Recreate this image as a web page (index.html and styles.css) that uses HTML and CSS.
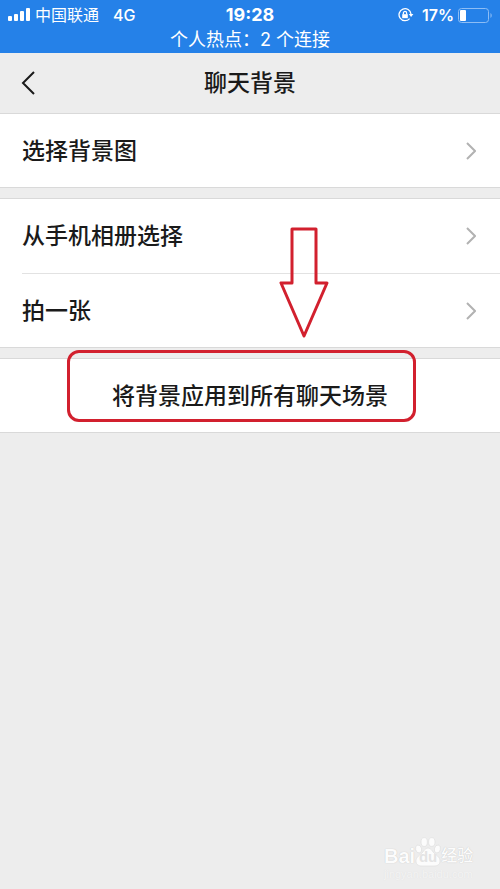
FILE: index.html
```html
<!DOCTYPE html>
<html lang="zh-CN">
<head>
    <meta charset="UTF-8">
    <meta name="viewport" content="width=device-width, initial-scale=1">
    <title>聊天背景</title>
    <link rel="stylesheet" href="styles.css">
</head>
<body>
    <div class="status">
        <div class="status-row">
            <div class="status-left">
                <svg class="signal" width="23" height="14" viewBox="0 0 23 14" fill="#fff">
                    <rect x="0" y="8" width="4" height="5" rx="1"/>
                    <rect x="6" y="6" width="4" height="7" rx="1"/>
                    <rect x="12" y="3" width="4" height="10" rx="1"/>
                    <rect x="18" y="0" width="4" height="13" rx="1"/>
                </svg>
                <span class="carrier">中国联通</span>
                <span class="network">4G</span>
            </div>
            <div class="time">19:28</div>
            <div class="status-right">
                <svg width="16" height="14" viewBox="0 0 16 14" fill="none" stroke="#fff" stroke-width="1.3">
                    <path d="M11.6 10.6A6 6 0 1 1 13 6"/>
                    <path d="M10.8 6h4.6l-2.3 3z" fill="#fff" stroke="none"/>
                    <rect x="4.2" y="6.2" width="5.6" height="4" fill="#fff" stroke="none"/>
                    <path d="M5.4 6.4V5a1.6 1.6 0 0 1 3.2 0v1.4"/>
                </svg>
                <span class="percent">17%</span>
                <svg width="34" height="15" viewBox="0 0 34 15" fill="none">
                    <rect x="0.5" y="0.5" width="30" height="14" rx="3" stroke="#8dbdf5"/>
                    <rect x="2" y="2" width="6" height="11" rx="1" fill="#fff"/>
                    <path d="M32.5 5c1.6 1 1.6 4 0 5z" fill="#8dbdf5"/>
                </svg>
            </div>
        </div>
        <div class="hotspot">个人热点：2 个连接</div>
    </div>

    <header class="nav">
        <button class="back" aria-label="返回">
            <svg width="14" height="24" viewBox="0 0 14 24" fill="none" stroke="#1a1a1a" stroke-width="2">
                <path d="M13 1L2 12l11 11"/>
            </svg>
        </button>
        <h1>聊天背景</h1>
    </header>

    <main>
        <div class="group">
            <a class="row" href="#">
                <span class="label">选择背景图</span>
                <svg class="chevron" viewBox="0 0 10 18"><path d="M1 1l8 8-8 8"/></svg>
            </a>
        </div>
        <div class="group">
            <a class="row" href="#">
                <span class="label">从手机相册选择</span>
                <svg class="chevron" viewBox="0 0 10 18"><path d="M1 1l8 8-8 8"/></svg>
            </a>
            <a class="row" href="#">
                <span class="label">拍一张</span>
                <svg class="chevron" viewBox="0 0 10 18"><path d="M1 1l8 8-8 8"/></svg>
            </a>
        </div>
        <div class="group">
            <button class="apply">将背景应用到所有聊天场景</button>
            <svg class="arrow" width="50" height="112" viewBox="0 0 50 112">
                <path d="M13 2h24v54h11L25 109 2 56h11z"/>
            </svg>
            <div class="mark"></div>
        </div>
    </main>

    <div class="watermark">
        <div class="brand">
            <span>Bai</span>
            <span class="paw">
                <svg width="26" height="30" viewBox="0 0 26 30" fill="#fcfcfc" stroke="#dcdcdc" stroke-width="0.6">
                    <ellipse cx="3.6" cy="12" rx="3" ry="4" transform="rotate(-15 3.6 12)"/>
                    <ellipse cx="9.2" cy="5" rx="3.2" ry="4.4"/>
                    <ellipse cx="16.8" cy="5" rx="3.2" ry="4.4"/>
                    <ellipse cx="22.4" cy="12" rx="3" ry="4" transform="rotate(15 22.4 12)"/>
                    <path d="M13 11c-3 0-4 3-6 5s-6 4-6 8c0 4 3 5 6 5h12c3 0 6-1 6-5 0-4-4-6-6-8s-3-5-6-5z"/>
                </svg>
                <span class="du">du</span>
            </span>
            <span class="cn">经验</span>
        </div>
        <div class="site">jingyan.baidu.com</div>
    </div>
</body>
</html>
```
FILE: styles.css
```css
* {
    box-sizing: border-box;
}
body {
    margin: 0;
    min-height: 100vh;
    position: relative;
    background: #ededed;
    color: #1a1a1a;
    font-family: "Liberation Sans", "Noto Sans CJK SC", sans-serif;
}
button {
    font: inherit;
    color: inherit;
    background: none;
    border: none;
    padding: 0;
    cursor: pointer;
}
svg {
    display: block;
}

/* status bar */
.status {
    height: 53px;
    padding: 2px 8px 0;
    background: #2581e8;
    color: #fff;
}
.status-row {
    display: grid;
    grid-template-columns: 1fr auto 1fr;
    align-items: center;
    height: 24px;
    font-size: 16px;
    line-height: 24px;
}
.status-left,
.status-right {
    display: flex;
    align-items: center;
}
.status-right {
    justify-content: flex-end;
}
.carrier {
    margin: 0 14px 0 4px;
    padding-top: 2px;
}
.network,
.time,
.percent {
    font-family: Inter, sans-serif;
}
.network {
    font-weight: 500;
}
.time {
    font-size: 18px;
    font-weight: 700;
}
.percent {
    margin: 0 4px 0 8px;
    font-weight: 600;
}
.hotspot {
    padding-top: 1px;
    font-family: Inter, "Noto Sans CJK SC", sans-serif;
    font-size: 18px;
    line-height: 26px;
    text-align: center;
}

/* title bar */
.nav {
    display: grid;
    grid-template-columns: 1fr auto 1fr;
    align-items: center;
    height: 60px;
    padding: 0 21px;
}
.nav h1 {
    margin: 0;
    font-size: 23px;
    font-weight: 500;
    line-height: 32px;
}
.back {
    justify-self: start;
}

/* list */
.group {
    position: relative;
    margin-bottom: 10px;
    background: #fff;
    border-top: 1px solid #d9d9d9;
    border-bottom: 1px solid #d9d9d9;
    font-size: 23px;
    font-weight: 500;
}
.row {
    display: flex;
    align-items: center;
    justify-content: space-between;
    height: 74px;
    margin-left: 22px;
    padding-right: 24px;
    color: inherit;
    text-decoration: none;
}
.row:only-child {
    height: 73px;
}
.row + .row {
    border-top: 1px solid #e2e2e2;
}
.label {
    padding-bottom: 4px;
}
.chevron {
    width: 10px;
    height: 18px;
    fill: none;
    stroke: #b2b2b2;
    stroke-width: 2;
}
.apply {
    display: block;
    width: 100%;
    height: 73px;
    padding-bottom: 4px;
}

/* red marks */
.mark {
    position: absolute;
    top: -9px;
    left: 67px;
    right: 84px;
    height: 72px;
    border: 3px solid #d2202e;
    border-radius: 12px;
    pointer-events: none;
}
.arrow {
    position: absolute;
    left: calc(50% + 29px);
    bottom: 93px;
    fill: none;
    stroke: #d2202e;
    stroke-width: 3;
    stroke-linejoin: round;
    pointer-events: none;
}

/* watermark */
.watermark {
    position: absolute;
    right: 26px;
    bottom: 8px;
    width: 90px;
    color: #fcfcfc;
    text-shadow: 0 0 1px #bbb;
}
.brand {
    display: flex;
    align-items: flex-end;
    font-size: 20px;
    font-weight: 700;
    line-height: 22px;
}
.paw {
    position: relative;
}
.du {
    position: absolute;
    left: 0;
    right: 0;
    bottom: -1px;
    color: #e4e4e4;
    font-size: 15px;
    text-align: center;
    text-shadow: none;
}
.cn {
    font-size: 16px;
    font-weight: 500;
}
.site {
    color: #f4f4f4;
    font-size: 11px;
    line-height: 14px;
    text-shadow: 0 0 1px #ddd;
}
```
